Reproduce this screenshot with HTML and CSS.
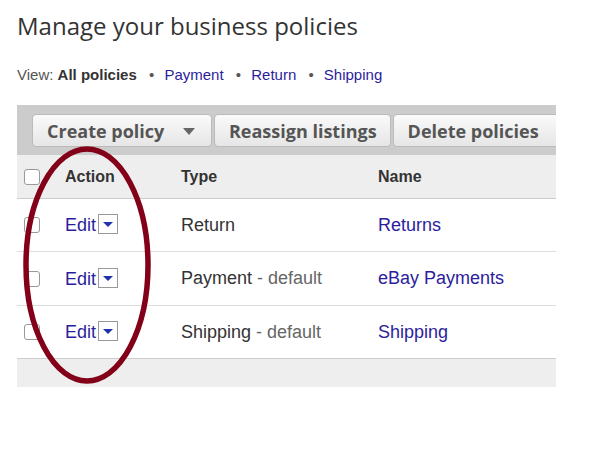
FILE: index.html
```html
<!DOCTYPE html>
<html lang="en">
<head>
    <meta charset="UTF-8">
    <meta name="viewport" content="width=device-width, initial-scale=1.0">
    <title>Business policies</title>
    <link rel="stylesheet" href="styles.css">
</head>
<body>
    <div class="page">
        <h1 class="title">Manage your business policies</h1>
        <div class="view-filter">
            View: <b>All policies</b>
            <span class="dot">&bull;</span> <a href="#">Payment</a>
            <span class="dot">&bull;</span> <a href="#">Return</a>
            <span class="dot">&bull;</span> <a href="#">Shipping</a>
        </div>

        <div class="policies">
            <div class="toolbar">
                <button class="btn btn-menu">Create policy <span class="caret"></span></button>
                <button class="btn">Reassign listings</button>
                <button class="btn btn-wide">Delete policies</button>
            </div>
            <table class="grid">
                <thead>
                    <tr>
                        <th class="col-check"><span class="checkbox"></span></th>
                        <th class="col-action">Action</th>
                        <th class="col-type">Type</th>
                        <th>Name</th>
                    </tr>
                </thead>
                <tbody>
                    <tr>
                        <td class="col-check"><span class="checkbox"></span></td>
                        <td class="col-action"><a href="#">Edit</a><span class="menu-toggle"></span></td>
                        <td class="col-type">Return</td>
                        <td><a href="#">Returns</a></td>
                    </tr>
                    <tr>
                        <td class="col-check"><span class="checkbox"></span></td>
                        <td class="col-action"><a href="#">Edit</a><span class="menu-toggle"></span></td>
                        <td class="col-type">Payment <span class="muted">- default</span></td>
                        <td><a href="#">eBay Payments</a></td>
                    </tr>
                    <tr>
                        <td class="col-check"><span class="checkbox"></span></td>
                        <td class="col-action"><a href="#">Edit</a><span class="menu-toggle"></span></td>
                        <td class="col-type">Shipping <span class="muted">- default</span></td>
                        <td><a href="#">Shipping</a></td>
                    </tr>
                </tbody>
            </table>
            <div class="grid-footer"></div>
        </div>

        <!-- hand-drawn circle around the Edit column -->
        <svg class="marker" width="140" height="250" viewBox="0 0 140 250">
            <ellipse cx="70" cy="125" rx="61" ry="116" fill="none" stroke="#820018" stroke-width="5.5"/>
        </svg>
    </div>
</body>
</html>
```

FILE: styles.css
```css
:root {
    --text-color: #333;
    --link-color: #2c1d9c;
    --muted-color: #666;
}
body {
    margin: 0;
    font-family: "Liberation Sans", Arial, sans-serif;
    color: var(--text-color);
    background: #fff;
}
.page {
    position: relative;
    padding: 11px 36px 0 17px;
}
.title {
    margin: 0;
    font-family: "Open Sans", "DejaVu Sans", sans-serif;
    font-weight: normal;
    font-size: 24px;
    line-height: 29px;
}
.view-filter {
    margin-top: 26px;
    font-size: 15px;
    line-height: 18px;
    color: #555;
}
.view-filter b {
    color: var(--text-color);
}
.view-filter .dot {
    margin: 0 6px 0 8px;
    color: #555;
}
a {
    color: var(--link-color);
    text-decoration: none;
}
.policies {
    margin-top: 21px;
    width: 539px;
    overflow: hidden;
}
.toolbar {
    display: flex;
    gap: 2px;
    background: #ccc;
    padding: 9px 0 8px 15px;
    white-space: nowrap;
}
.btn {
    flex: none;
    height: 33px;
    padding: 0 13px 0 14px;
    border: 1px solid #bbb;
    border-radius: 4px;
    background: linear-gradient(#fafafa, #e6e6e6);
    font-family: "Open Sans", "DejaVu Sans", sans-serif;
    font-weight: bold;
    font-size: 18px;
    color: #555;
}
.btn-menu {
    padding-right: 16px;
}
.btn-wide {
    padding-right: 20px;
}
.caret {
    display: inline-block;
    margin-left: 14px;
    border-left: 6px solid transparent;
    border-right: 6px solid transparent;
    border-top: 7px solid #666;
    vertical-align: 3px;
}
.grid {
    width: 100%;
    border-collapse: collapse;
}
.grid th {
    height: 43px;
    background: #eee;
    border-bottom: 1px solid #ccc;
    text-align: left;
    font-size: 16px;
    padding: 0;
}
.grid td {
    height: 52px;
    border-bottom: 1px solid #ddd;
    font-size: 18px;
    padding: 0;
}
.grid tbody tr:nth-child(2) td {
    height: 53px;
}
.grid tbody tr:last-child td {
    border-bottom-color: #ccc;
}
.col-check {
    width: 48px;
    padding-left: 7px !important;
    box-sizing: border-box;
}
.col-action {
    width: 116px;
}
.col-type {
    width: 197px;
}
.checkbox {
    display: block;
    width: 14px;
    height: 14px;
    border: 1px solid #999;
    border-radius: 3px;
    background: #fff;
}
.menu-toggle {
    display: inline-block;
    position: relative;
    width: 18px;
    height: 18px;
    margin-left: 2px;
    border: 1px solid #999;
    background: #fff;
    vertical-align: -3px;
}
.menu-toggle::after {
    content: "";
    position: absolute;
    left: 4px;
    top: 7px;
    border-left: 5px solid transparent;
    border-right: 5px solid transparent;
    border-top: 5px solid #2233aa;
}
.muted {
    color: var(--muted-color);
}
.grid-footer {
    height: 28px;
    background: #eee;
}
.marker {
    position: absolute;
    left: 17px;
    top: 140px;
}
```
